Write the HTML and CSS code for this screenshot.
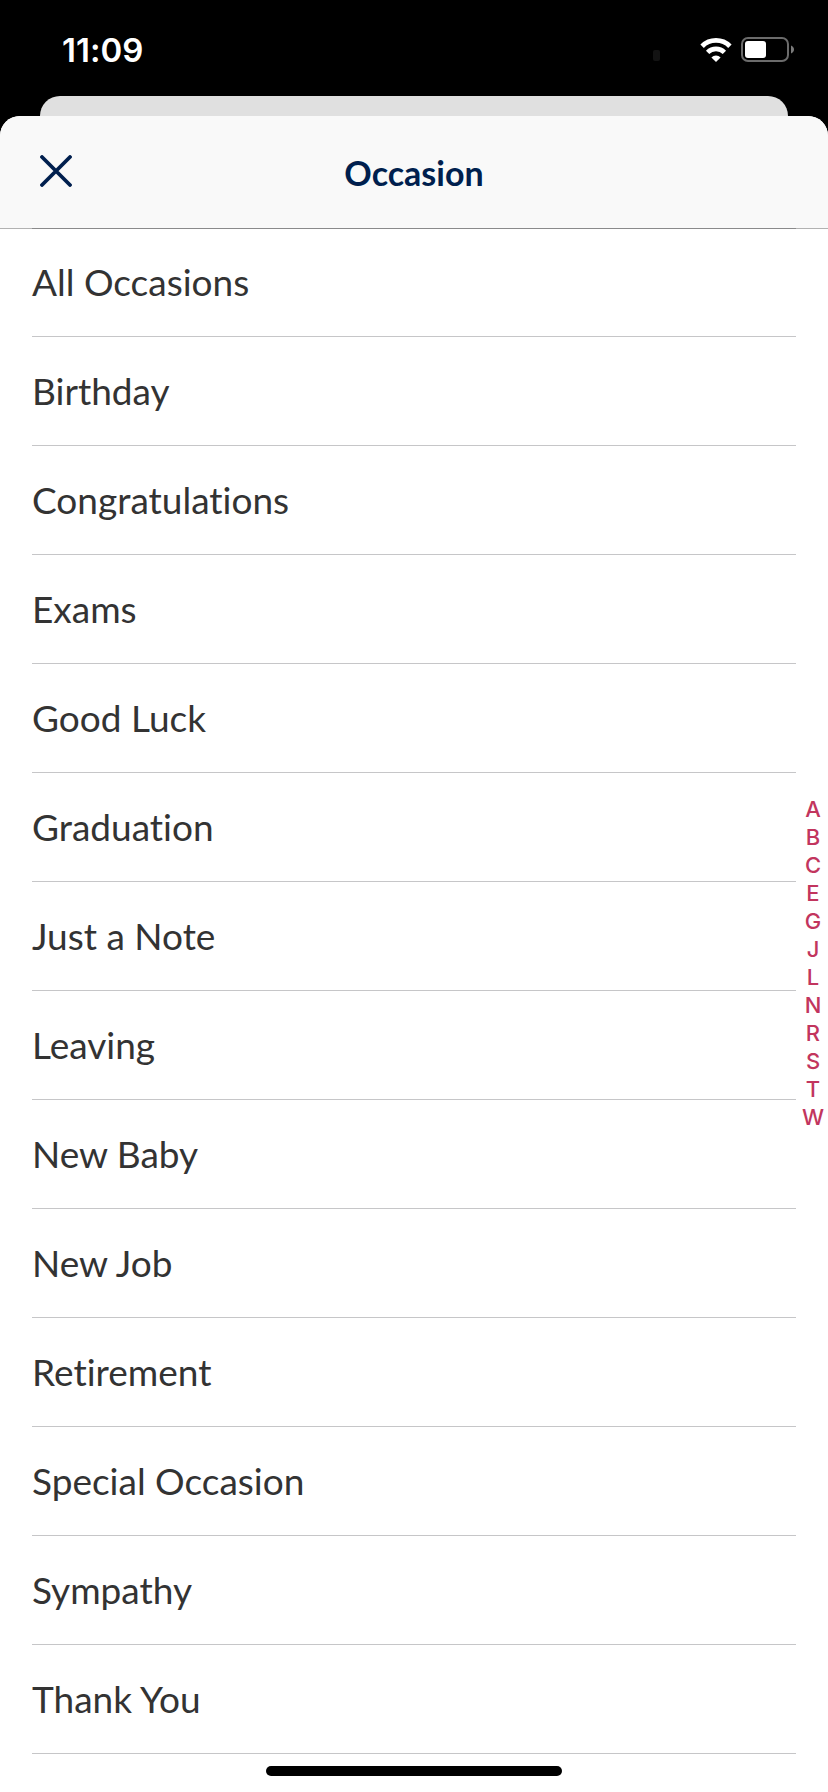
FILE: index.html
```html
<!DOCTYPE html>
<html lang="en">
<head>
    <meta charset="utf-8">
    <meta name="viewport" content="width=device-width, initial-scale=1">
    <title>Occasion</title>
    <link rel="stylesheet" href="styles.css">
</head>
<body>
    <div class="status-bar">
        <time class="clock">11:09</time>
        <div class="status-icons">
            <span class="signal"></span>
            <svg class="wifi" width="32" height="24" viewBox="0 0 32 24" aria-hidden="true">
                <path d="M2.1 8.2 A19.6 19.6 0 0 1 29.9 8.2" fill="none" stroke="#fff" stroke-width="4.8"/>
                <path d="M7.6 14.4 A11.8 11.8 0 0 1 24.4 14.4" fill="none" stroke="#fff" stroke-width="4.6"/>
                <path d="M16 24 L11.4 19.4 A6.6 6.6 0 0 1 20.6 19.4 Z" fill="#fff"/>
            </svg>
            <svg class="battery" width="54" height="26" viewBox="0 0 54 26" aria-hidden="true">
                <rect x="1" y="1" width="46" height="23" rx="6" fill="none" stroke="#6b6b6b" stroke-width="2"/>
                <rect x="4" y="4" width="21" height="17" rx="3" fill="#fff"/>
                <path d="M50 8.5 C54 10 54 15 50 16.5 Z" fill="#7a7a7a"/>
            </svg>
        </div>
    </div>
    <div class="card-behind"></div>

    <main class="sheet">
        <header class="sheet-header">
            <button type="button" class="close" aria-label="Close">
                <svg width="32" height="32" viewBox="0 0 32 32" aria-hidden="true">
                    <path d="M2 2 L30 30 M30 2 L2 30" fill="none" stroke="#001f4e" stroke-width="3.8" stroke-linecap="round"/>
                </svg>
            </button>
            <h1>Occasion</h1>
        </header>

        <div class="sheet-body">
            <ul class="occasions">
                <li id="A"><button type="button">All Occasions</button></li>
                <li id="B"><button type="button">Birthday</button></li>
                <li id="C"><button type="button">Congratulations</button></li>
                <li id="E"><button type="button">Exams</button></li>
                <li id="G"><button type="button">Good Luck</button></li>
                <li><button type="button">Graduation</button></li>
                <li id="J"><button type="button">Just a Note</button></li>
                <li id="L"><button type="button">Leaving</button></li>
                <li id="N"><button type="button">New Baby</button></li>
                <li><button type="button">New Job</button></li>
                <li id="R"><button type="button">Retirement</button></li>
                <li id="S"><button type="button">Special Occasion</button></li>
                <li><button type="button">Sympathy</button></li>
                <li id="T"><button type="button">Thank You</button></li>
            </ul>
            <nav class="index">
                <a href="#A">A</a>
                <a href="#B">B</a>
                <a href="#C">C</a>
                <a href="#E">E</a>
                <a href="#G">G</a>
                <a href="#J">J</a>
                <a href="#L">L</a>
                <a href="#N">N</a>
                <a href="#R">R</a>
                <a href="#S">S</a>
                <a href="#T">T</a>
                <a href="#W">W</a>
            </nav>
        </div>
    </main>
    <div class="home-indicator"></div>
</body>
</html>
```
FILE: styles.css
```css
* {
    box-sizing: border-box;
}
body {
    margin: 0;
    min-height: 100vh;
    display: flex;
    flex-direction: column;
    background: #000;
    color: #333;
    font-family: Lato, "Liberation Sans", sans-serif;
    font-variant-ligatures: none;
}
button {
    padding: 0;
    border: none;
    background: none;
    color: inherit;
    font: inherit;
    font-variant-ligatures: none;
    cursor: pointer;
}

/* Status bar */
.status-bar {
    display: flex;
    align-items: center;
    justify-content: space-between;
    height: 96px;
    padding: 4px 33px 0 62px;
}
.clock {
    color: #fff;
    font-family: Inter, "Liberation Sans", sans-serif;
    font-size: 33px;
    font-weight: 600;
}
.status-icons {
    display: flex;
    align-items: center;
}
.signal {
    width: 7px;
    height: 11px;
    margin: 10px 40px 0 0;
    border-radius: 2px;
    background: #131313;
}
.battery {
    margin-left: 9px;
}

/* Sheet */
.card-behind {
    height: 20px;
    margin: 0 40px;
    border-radius: 20px 20px 0 0;
    background: #e0e0e0;
}
.sheet {
    flex: 1;
    display: flex;
    flex-direction: column;
    border-radius: 20px 20px 0 0;
    background: #fff;
    overflow: hidden;
}
.sheet-header {
    position: relative;
    z-index: 1;
    display: grid;
    grid-template-columns: 1fr auto 1fr;
    align-items: center;
    height: 113px;
    padding: 0 40px;
    border-bottom: 1px solid rgba(0, 0, 0, 0.3);
    background: #f9f9f9;
    background-clip: padding-box;
}
.close {
    display: flex;
    width: 32px;
    padding-bottom: 3px;
}
h1 {
    margin: 0;
    color: #001f4e;
    font-size: 34px;
    font-weight: 700;
}
.sheet-body {
    position: relative;
    flex: 1;
    margin-top: -1px;
}
.occasions {
    margin: 0;
    padding: 0 32px;
    list-style: none;
}
.occasions li {
    height: 109px;
    border-bottom: 1px solid #c6c6c8;
}
.occasions li:first-child {
    border-top: 1px solid #c6c6c8;
}
.occasions button {
    width: 100%;
    height: 100%;
    padding-bottom: 2px;
    font-size: 37px;
    font-weight: 400;
    text-align: left;
}

/* Letter index down the right edge */
.index {
    position: absolute;
    top: 0;
    right: 0;
    bottom: 0;
    display: flex;
    flex-direction: column;
    justify-content: center;
    width: 30px;
    padding-bottom: 94px;
}
.index a {
    color: #c2355e;
    font-family: Inter, "Liberation Sans", sans-serif;
    font-size: 22px;
    font-weight: 500;
    line-height: 28px;
    text-align: center;
    text-decoration: none;
}

.home-indicator {
    position: fixed;
    bottom: 16px;
    left: 50%;
    width: 296px;
    height: 10px;
    border-radius: 5px;
    background: #000;
    transform: translateX(-50%);
}
```
